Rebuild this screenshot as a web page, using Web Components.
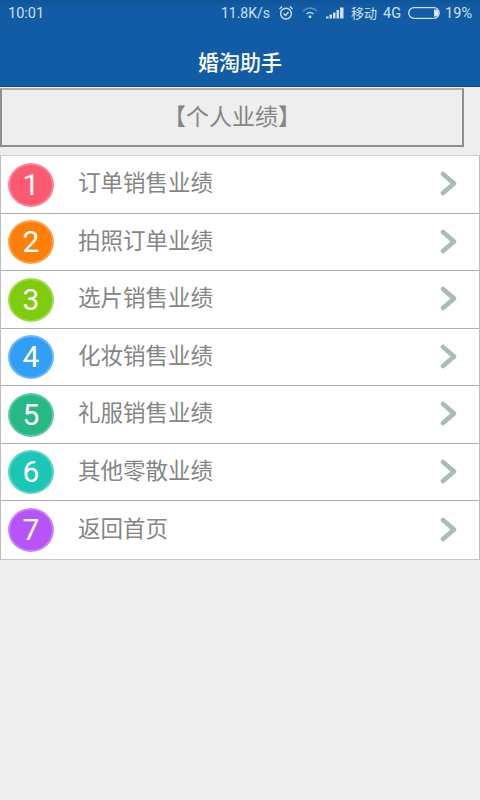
<!DOCTYPE html>
<html><head><meta charset="utf-8">
<style>
html,body{margin:0;padding:0;background:#eee;}
body{width:480px;height:800px;overflow:hidden;font-family:"Noto Sans CJK SC","Roboto",sans-serif;}
</style></head><body>
<app-header></app-header>
<section-title>【个人业绩】</section-title>
<menu-list>
<menu-row num="1" color="#fc5a71" ring="#fb8698">订单销售业绩</menu-row>
<menu-row num="2" color="#fd7f0b" ring="#fba24a">拍照订单业绩</menu-row>
<menu-row num="3" color="#7fcc0e" ring="#a0d94f">选片销售业绩</menu-row>
<menu-row num="4" color="#329ff5" ring="#6cb9f6">化妆销售业绩</menu-row>
<menu-row num="5" color="#27b886" ring="#5ec9a5">礼服销售业绩</menu-row>
<menu-row num="6" color="#1cc6b6" ring="#58d4c8">其他零散业绩</menu-row>
<menu-row num="7" color="#b654f7" ring="#ca84f8">返回首页</menu-row>
</menu-list>
<script>
function def(name,html){
  customElements.define(name,class extends HTMLElement{
    constructor(){super();const r=this.attachShadow({mode:'open'});r.innerHTML=html;}
  });
}
def('status-bar',`<style>
:host{display:flex;align-items:center;height:26px;padding:0 8px;box-sizing:border-box;color:#cfe0f0;font:14.5px Roboto,"Noto Sans CJK SC",sans-serif;}
.sp{flex:1}.r{display:flex;align-items:center}
svg{display:block}
</style>
<span>10:01</span><span class="sp"></span>
<div class="r">
<span style="font-size:14px">11.8K/s</span>
<svg style="margin-left:8px" width="16" height="16" viewBox="0 0 16 16" fill="none" stroke="#cfe0f0" stroke-width="1.4"><circle cx="8" cy="8.600" r="5.400"/><path d="M5.500 8.500L7.500 10.500L10.500 7M1.500 4L4 1.600M14.500 4L12 1.600"/></svg>
<svg style="margin-left:8px" width="16" height="14" viewBox="0 0 16 14" fill="none" stroke="#5f90c0" stroke-width="1.400"><path d="M1 5Q8 -1 15 5"/><path stroke="#c0d5e8" d="M4.500 8Q8 5 11.500 8"/><circle cx="8" cy="10.800" r="1.400" fill="#dbe7f2" stroke="none"/></svg>
<svg style="margin-left:8px" width="18" height="12" viewBox="0 0 18 12" fill="#cfe0f0"><path d="M0 11.500h2.500v-2H0zM3.500 11.500h2.500V7.500H3.500zM7 11.500h2.500V5.500H7zM10.500 11.500h2.500V3h-2.500zM14 11.500h3.500V.5H14z"/></svg>
<span style="margin:0 0 2px 7px;font-size:13px">移动</span>
<span style="margin-left:6px">4G</span>
<svg style="margin-left:7px" width="33" height="12" viewBox="0 0 33 12" fill="none"><rect x=".7" y=".7" width="30.500" height="10.600" rx="5.300" stroke="#cfe0f0" stroke-width="1.300"/><path d="M26 2.500h1a3.500 3.500 0 0 1 0 7h-1z" fill="#dfe9f3"/></svg>
<span style="margin-left:4px">19%</span>
</div>`);
def('app-header',`<style>
:host{display:block;height:87px;background:linear-gradient(#105596 0,#115ca4 6px,#115ca4 100%);border-bottom:1px solid #0d4a86;box-sizing:border-box;}
.t{display:flex;justify-content:center;align-items:center;height:60px;padding-top:10px;box-sizing:border-box;color:#fff;font:500 21px/1 "Noto Sans CJK SC",sans-serif;}
</style><status-bar></status-bar><div class="t">婚淘助手</div>`);
def('section-title',`<style>
:host{display:flex;align-items:center;justify-content:center;box-sizing:border-box;width:464px;height:59px;margin-top:1px;padding-bottom:5px;border:2px solid #8f8f8f;border-top-color:#b0b0b0;background:#eee;color:#858585;font:23px/1 "Noto Sans CJK SC",sans-serif;}
</style><slot></slot>`);
def('menu-list',`<style>
:host{display:block;margin-top:8px;background:#fff;border:1px solid #bdbdbd;border-top-color:#d0d0d0;border-bottom-color:#c4c4c4;}
::slotted(menu-row:not(:last-child)){border-bottom:1px solid #a9b0ae;}
</style><slot></slot>`);
customElements.define('menu-row',class extends HTMLElement{
  constructor(){super();const r=this.attachShadow({mode:'open'});
  const c=this.getAttribute('color'),g=this.getAttribute('ring'),n=this.getAttribute('num');
  r.innerHTML=`<style>
:host{display:flex;align-items:center;height:57.500px;box-sizing:border-box;padding:0 22px 0 7px;color:#858585;font:22.500px/1 "Noto Sans CJK SC",sans-serif;}
.n{flex:none;width:46px;height:44px;margin-top:1px;box-sizing:border-box;border-radius:50%;border:2px solid ${g};background:${c};color:#fff;display:flex;align-items:center;justify-content:center;font:400 30px/1 Roboto,sans-serif;}
.t{flex:1;margin-left:24px;padding-bottom:6px;}
svg{display:block;margin-bottom:1px}
</style><span class="n">${n}</span><span class="t"><slot></slot></span>
<svg width="17" height="25" viewBox="0 0 17 25" fill="none" stroke="#a9bbb6" stroke-width="4.500" stroke-linecap="round" stroke-linejoin="round"><path d="M3 3L14 12.500L3 22"/></svg>`;}
});
</script>
</body></html>
